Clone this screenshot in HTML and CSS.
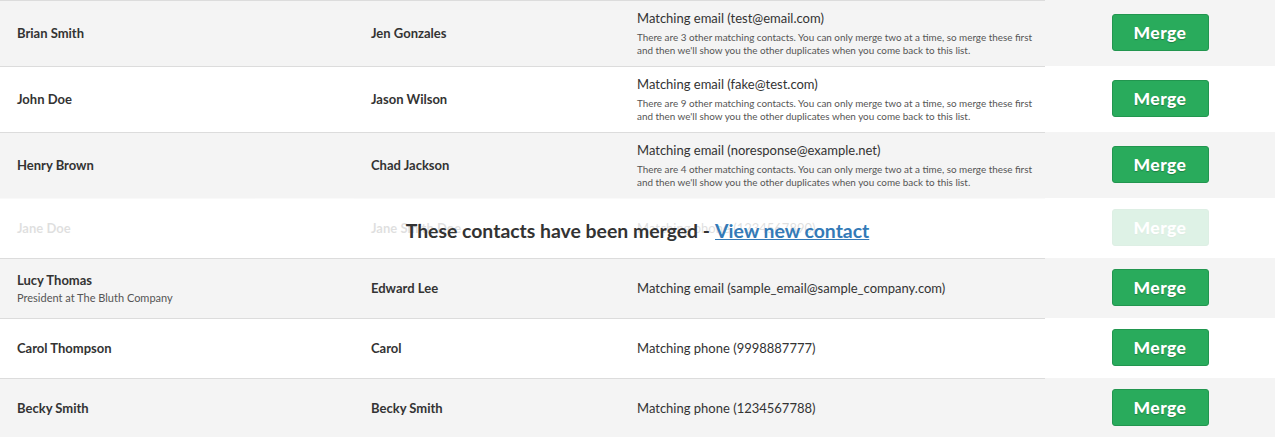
FILE: index.html
```html
<!DOCTYPE html>
<html lang="en">
<head>
<meta charset="utf-8">
<title>Duplicate contacts</title>
<link rel="stylesheet" href="styles.css">
</head>
<body>
<div class="list">
  <div class="row alt tall">
    <div class="cell"><div class="name">Brian Smith</div></div>
    <div class="cell"><div class="name">Jen Gonzales</div></div>
    <div class="cell match">
      <div class="reason">Matching email (test@email.com)</div>
      <div class="note">There are 3 other matching contacts. You can only merge two at a time, so merge these first and then we'll show you the other duplicates when you come back to this list.</div>
    </div>
    <div class="cell action"><button class="merge">Merge</button></div>
  </div>
  <div class="row tall">
    <div class="cell"><div class="name">John Doe</div></div>
    <div class="cell"><div class="name">Jason Wilson</div></div>
    <div class="cell match">
      <div class="reason">Matching email (fake@test.com)</div>
      <div class="note">There are 9 other matching contacts. You can only merge two at a time, so merge these first and then we'll show you the other duplicates when you come back to this list.</div>
    </div>
    <div class="cell action"><button class="merge">Merge</button></div>
  </div>
  <div class="row alt tall">
    <div class="cell"><div class="name">Henry Brown</div></div>
    <div class="cell"><div class="name">Chad Jackson</div></div>
    <div class="cell match">
      <div class="reason">Matching email (noresponse@example.net)</div>
      <div class="note">There are 4 other matching contacts. You can only merge two at a time, so merge these first and then we'll show you the other duplicates when you come back to this list.</div>
    </div>
    <div class="cell action"><button class="merge">Merge</button></div>
  </div>
  <div class="row merged">
    <div class="cell faded"><div class="name">Jane Doe</div></div>
    <div class="cell faded"><div class="name">Jane Smith Doe</div></div>
    <div class="cell match faded"><div class="reason">Matching phone (1234567890)</div></div>
    <div class="cell action faded"><button class="merge">Merge</button></div>
    <div class="merged-msg">These contacts have been merged - <a href="#">View new contact</a></div>
  </div>
  <div class="row alt">
    <div class="cell"><div class="name">Lucy Thomas</div><div class="title">President at The Bluth Company</div></div>
    <div class="cell"><div class="name">Edward Lee</div></div>
    <div class="cell match"><div class="reason">Matching email (sample_email@sample_company.com)</div></div>
    <div class="cell action"><button class="merge">Merge</button></div>
  </div>
  <div class="row">
    <div class="cell"><div class="name">Carol Thompson</div></div>
    <div class="cell"><div class="name">Carol</div></div>
    <div class="cell match"><div class="reason">Matching phone (9998887777)</div></div>
    <div class="cell action"><button class="merge">Merge</button></div>
  </div>
  <div class="row alt">
    <div class="cell"><div class="name">Becky Smith</div></div>
    <div class="cell"><div class="name">Becky Smith</div></div>
    <div class="cell match"><div class="reason">Matching phone (1234567788)</div></div>
    <div class="cell action"><button class="merge">Merge</button></div>
  </div>
</div>
</body>
</html>
```
FILE: styles.css
```css
html, body {
  margin: 0;
  padding: 0;
  background: #fff;
}
body {
  font-family: Lato, "Open Sans", "Liberation Sans", sans-serif;
  color: #333;
}
.list {
  width: 1275px;
}
.row {
  position: relative;
  display: grid;
  grid-template-columns: 354px 266px 425px 1fr;
  height: 60px;
  background: #fff;
}
.row.tall {
  height: 66px;
}
.row.alt {
  background: #f4f4f4;
}
.cell {
  display: flex;
  flex-direction: column;
  justify-content: center;
  padding-left: 17px;
  border-top: 1px solid #dcdcdc;
  min-width: 0;
}
.cell.action {
  border-top-color: transparent;
  padding-left: 0;
  align-items: center;
}
.name {
  font-size: 13px;
  font-weight: 700;
  line-height: 15px;
  color: #333;
}
.title {
  font-size: 11px;
  line-height: 14px;
  margin-top: 3px;
  color: #555;
}
.reason {
  font-size: 13px;
  line-height: 17px;
  color: #333;
}
.note {
  font-size: 9.9px;
  line-height: 13.5px;
  margin-top: 4px;
  color: #555;
  padding-right: 10px;
}
.merge {
  width: 97px;
  height: 37px;
  margin-top: -2px;
  background: #29ab5c;
  border: 1px solid #22964f;
  border-radius: 3px;
  color: #fff;
  font-family: Lato, "Open Sans", "Liberation Sans", sans-serif;
  font-weight: 900;
  font-size: 17.5px;
  letter-spacing: 0.4px;
  text-shadow: 0 1px 1px rgba(0, 0, 0, 0.25);
  padding: 0;
}
.faded {
  opacity: 0.15;
}
.merged-msg {
  position: absolute;
  left: 0;
  right: 0;
  top: 1px;
  bottom: 0;
  display: flex;
  align-items: center;
  justify-content: center;
  font-size: 19.4px;
  font-weight: 700;
  color: #333;
  padding-top: 4px;
  box-sizing: border-box;
}
.merged-msg a {
  color: #337ab7;
  text-decoration: underline;
  margin-left: 5px;
}
```
